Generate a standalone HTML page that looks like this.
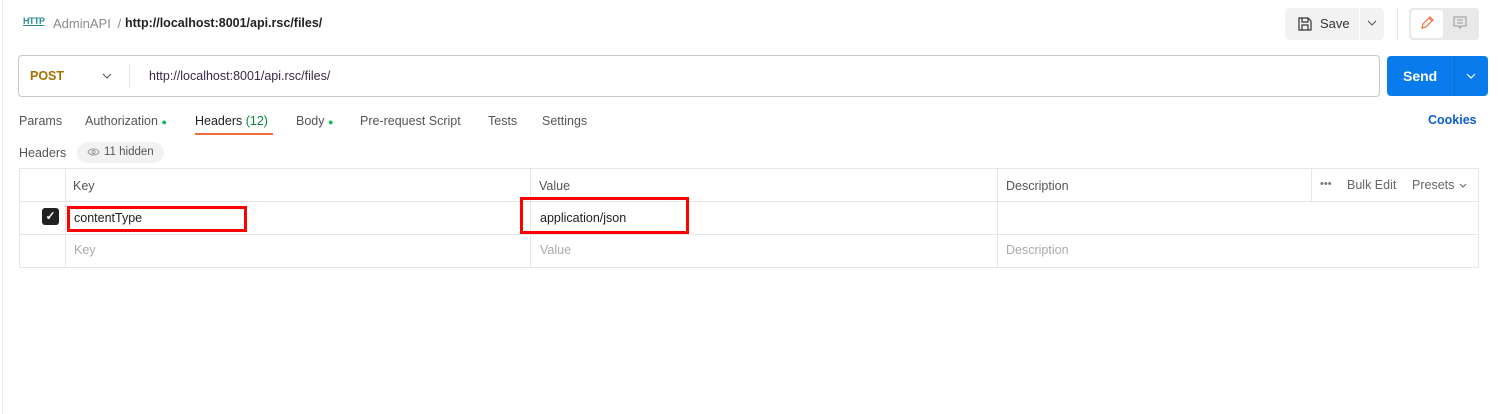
<!DOCTYPE html>
<html><head><style>
*{box-sizing:border-box;margin:0;padding:0}
body{width:1498px;height:414px;background:#fff;font-family:"Liberation Sans",sans-serif;font-size:13px;color:#212121;position:relative;overflow:hidden}
.a{position:absolute;white-space:nowrap}
.vl{position:absolute;background:#e6e6e6;width:1px}
.hl{position:absolute;background:#e6e6e6;height:1px}
</style></head><body>
<div class="vl" style="left:2px;top:0;height:414px;background:#ececec"></div>
<div class="a" style="left:23px;top:16px;font-size:9px;color:#2a8c8c;font-weight:bold;text-decoration:underline;letter-spacing:-0.5px">HTTP</div>
<div class="a" style="left:53px;top:16px;color:#8a8a8a">AdminAPI</div>
<div class="a" style="left:114px;top:16px;color:#8a8a8a">&nbsp;/</div>
<div class="a" style="left:125px;top:16px;color:#212121;font-weight:bold;font-size:12.5px">http://localhost:8001/api.rsc/files/</div>
<div class="a" style="left:1285px;top:8px;width:99px;height:32px;background:#f2f2f2;border-radius:4px"></div>
<div class="vl" style="left:1359px;top:8px;height:32px;background:#fff"></div>
<svg class="a" style="left:1297px;top:16px" width="16" height="16" viewBox="0 0 16 16" fill="none" stroke="#333" stroke-width="1.2"><path d="M2 2h9l3 3v9H2z"/><path d="M5 2v4h6V2M5 14v-5h6v5"/></svg>
<div class="a" style="left:1320px;top:16px;color:#333">Save</div>
<svg class="a" style="left:1367px;top:20px" width="10" height="6" viewBox="0 0 10 6" fill="none" stroke="#555" stroke-width="1.1"><path d="M1 1l4 4 4-4"/></svg>
<div class="vl" style="left:1397px;top:8px;height:32px;background:#e6e6e6"></div>
<div class="a" style="left:1409px;top:8px;width:70px;height:32px;background:#e9e9e9;border-radius:4px"></div>
<div class="a" style="left:1411px;top:10px;width:32px;height:28px;background:#fff;border-radius:3px"></div>
<svg class="a" style="left:1419px;top:15px" width="16" height="16" viewBox="0 0 16 16" fill="none" stroke="#f26b3a" stroke-width="1.2"><path d="M3 13l1-4 7-7 3 3-7 7z M10 3l3 3"/></svg>
<svg class="a" style="left:1452px;top:15px" width="16" height="16" viewBox="0 0 16 16" fill="none" stroke="#999" stroke-width="1.1"><path d="M2 2h12v9H9l-1 2-1-2H2z M5 5h6M5 8h6"/></svg>
<div class="a" style="left:18px;top:55px;width:1362px;height:42px;border:1px solid #c7c7c7;border-radius:4px"></div>
<div class="a" style="left:30px;top:69px;color:#a86e00;font-weight:bold;font-size:12.5px">POST</div>
<svg class="a" style="left:102px;top:73px" width="10" height="6" viewBox="0 0 10 6" fill="none" stroke="#555" stroke-width="1.1"><path d="M1 1l4 4 4-4"/></svg>
<div class="vl" style="left:129px;top:64px;height:24px"></div>
<div class="a" style="left:144px;top:68px;color:#bbb;font-size:7px">·</div>
<div class="a" style="left:149px;top:69px;color:#3a2a4a;font-size:12.5px">http://localhost:8001/api.rsc/files/</div>
<div class="a" style="left:1387px;top:56px;width:101px;height:40px;background:#097bed;border-radius:4px"></div>
<div class="vl" style="left:1454px;top:56px;height:40px;background:#0a6ed1"></div>
<div class="a" style="left:1403px;top:68px;color:#fff;font-weight:bold;font-size:14px">Send</div>
<svg class="a" style="left:1466px;top:73px" width="10" height="6" viewBox="0 0 10 6" fill="none" stroke="#fff" stroke-width="1.2"><path d="M1 1l4 4 4-4"/></svg>
<div class="a" style="left:19px;top:114px;color:#555;font-size:12.5px">Params</div>
<div class="a" style="left:85px;top:114px;color:#555;font-size:12.5px">Authorization <span style="color:#0cbb52;font-size:9px">●</span></div>
<div class="a" style="left:195px;top:114px;color:#212121;font-size:12.5px">Headers <span style="color:#0a8a3a">(12)</span></div>
<div class="a" style="left:195px;top:133px;width:78px;height:2px;background:#f26b3a"></div>
<div class="a" style="left:296px;top:114px;color:#555;font-size:12.5px">Body <span style="color:#0cbb52;font-size:9px">●</span></div>
<div class="a" style="left:360px;top:114px;color:#555;font-size:12.5px">Pre-request Script</div>
<div class="a" style="left:488px;top:114px;color:#555;font-size:12.5px">Tests</div>
<div class="a" style="left:542px;top:114px;color:#555;font-size:12.5px">Settings</div>
<div class="a" style="left:1428px;top:113px;color:#0b5fce;font-weight:bold;font-size:12.5px">Cookies</div>
<div class="a" style="left:19px;top:146px;color:#555;font-size:12.5px">Headers</div>
<div class="a" style="left:77px;top:142px;width:87px;height:21px;background:#f2f2f2;border-radius:11px"></div>
<svg class="a" style="left:87px;top:147px" width="13" height="10" viewBox="0 0 13 10" fill="none" stroke="#999" stroke-width="1.1"><path d="M1 5c2-4 9-4 11 0c-2 4-9 4-11 0z"/><circle cx="6.5" cy="5" r="1.5"/></svg>
<div class="a" style="left:104px;top:146px;color:#555;font-size:11.5px">11 hidden</div>
<div class="a" style="left:19px;top:168px;width:1460px;height:100px;border:1px solid #e6e6e6"></div>
<div class="hl" style="left:19px;top:201px;width:1460px"></div>
<div class="hl" style="left:19px;top:234px;width:1460px"></div>
<div class="vl" style="left:65px;top:168px;height:100px"></div>
<div class="vl" style="left:530px;top:168px;height:100px"></div>
<div class="vl" style="left:997px;top:168px;height:100px"></div>
<div class="vl" style="left:1311px;top:168px;height:33px"></div>
<div class="a" style="left:73px;top:179px;color:#555;font-size:12.5px">Key</div>
<div class="a" style="left:539px;top:179px;color:#555;font-size:12.5px">Value</div>
<div class="a" style="left:1006px;top:179px;color:#555;font-size:12.5px">Description</div>
<div class="a" style="left:1320px;top:178px;color:#777;font-size:11px">•••</div>
<div class="a" style="left:1347px;top:178px;color:#666;font-size:12.5px">Bulk Edit</div>
<div class="a" style="left:1412px;top:178px;color:#666;font-size:12.5px">Presets</div>
<svg class="a" style="left:1459px;top:183px" width="8" height="5" viewBox="0 0 8 5" fill="none" stroke="#666" stroke-width="1"><path d="M1 1l3 3 3-3"/></svg>
<div class="a" style="left:42px;top:208px;width:17px;height:17px;background:#212121;border-radius:3px;color:#fff;font-size:12px;text-align:center;line-height:17px;font-weight:bold">✓</div>
<div class="a" style="left:74px;top:211px;color:#212121;font-size:12.5px">contentType</div>
<div class="a" style="left:540px;top:211px;color:#212121;font-size:12.5px">application/json</div>
<div class="a" style="left:67px;top:206px;width:180px;height:26px;border:3px solid #f00"></div>
<div class="a" style="left:520px;top:197px;width:169px;height:37px;border:3px solid #f00"></div>
<div class="a" style="left:74px;top:243px;color:#aaa;font-size:12.5px">Key</div>
<div class="a" style="left:540px;top:243px;color:#aaa;font-size:12.5px">Value</div>
<div class="a" style="left:1006px;top:243px;color:#aaa;font-size:12.5px">Description</div>
</body></html>
